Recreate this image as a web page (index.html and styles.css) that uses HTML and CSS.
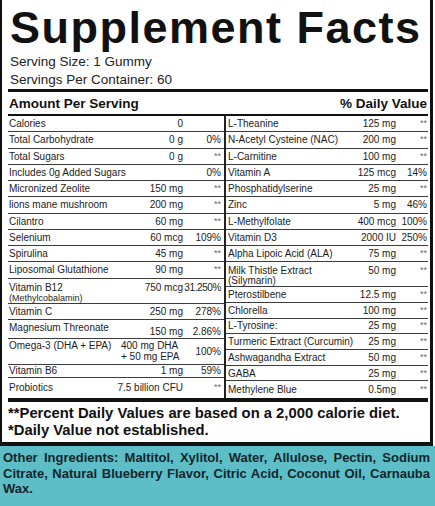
FILE: index.html
```html
<!DOCTYPE html>
<html lang="en">
<head>
  <meta charset="UTF-8" />
  <meta name="viewport" content="width=device-width, initial-scale=1.0" />
  <title>Supplement Facts</title>
  <link rel="stylesheet" href="styles.css">
</head>
<body>
  <div class="label">
    <h1 class="title">Supplement Facts</h1>
    <p class="serving">Serving Size: 1 Gummy</p>
    <p class="serving">Servings Per Container: 60</p>
    <div class="head-row">
      <span>Amount Per Serving</span>
      <span>% Daily Value</span>
    </div>

    <div class="facts">
      <div class="col col-left">
        <div class="row"><span class="name">Calories</span><span class="amt">0</span><span class="dv"></span></div>
        <div class="row"><span class="name">Total Carbohydrate</span><span class="amt">0 g</span><span class="dv">0%</span></div>
        <div class="row"><span class="name">Total Sugars</span><span class="amt">0 g</span><span class="dv na">**</span></div>
        <div class="row"><span class="name">Includes 0g Added Sugars</span><span class="amt"></span><span class="dv">0%</span></div>
        <div class="row"><span class="name">Micronized Zeolite</span><span class="amt">150 mg</span><span class="dv na">**</span></div>
        <div class="row"><span class="name">lions mane mushroom</span><span class="amt">200 mg</span><span class="dv na">**</span></div>
        <div class="row"><span class="name">Cilantro</span><span class="amt">60 mg</span><span class="dv na">**</span></div>
        <div class="row"><span class="name">Selenium</span><span class="amt">60 mcg</span><span class="dv">109%</span></div>
        <div class="row"><span class="name">Spirulina</span><span class="amt">45 mg</span><span class="dv na">**</span></div>
        <div class="row"><span class="name">Liposomal Glutathione</span><span class="amt">90 mg</span><span class="dv na">**</span></div>
        <div class="row two b12"><span class="name">Vitamin B12<span class="sub small">(Methylcobalamin)</span></span><span class="amt">750 mcg</span><span class="dv tight">31.250%</span></div>
        <div class="row"><span class="name">Vitamin C</span><span class="amt">250 mg</span><span class="dv">278%</span></div>
        <div class="row mg"><span class="name">Magnesium Threonate</span><span class="amt">150 mg</span><span class="dv">2.86%</span></div>
        <div class="row omega"><span class="name">Omega-3 (DHA + EPA)</span><span class="amt stack">400 mg DHA<br>+ 50 mg EPA</span><span class="dv">100%</span></div>
        <div class="row b6"><span class="name">Vitamin B6</span><span class="amt">1 mg</span><span class="dv">59%</span></div>
        <div class="row last"><span class="name">Probiotics</span><span class="amt">7.5 billion CFU</span><span class="dv na">**</span></div>
      </div>

      <div class="col col-right">
        <div class="row"><span class="name">L-Theanine</span><span class="amt">125 mg</span><span class="dv na">**</span></div>
        <div class="row"><span class="name">N-Acetyl Cysteine (NAC)</span><span class="amt">200 mg</span><span class="dv na">**</span></div>
        <div class="row"><span class="name">L-Carnitine</span><span class="amt">100 mg</span><span class="dv na">**</span></div>
        <div class="row"><span class="name">Vitamin A</span><span class="amt">125 mcg</span><span class="dv">14%</span></div>
        <div class="row"><span class="name">Phosphatidylserine</span><span class="amt">25 mg</span><span class="dv na">**</span></div>
        <div class="row"><span class="name">Zinc</span><span class="amt">5 mg</span><span class="dv">46%</span></div>
        <div class="row"><span class="name">L-Methylfolate</span><span class="amt">400 mcg</span><span class="dv">100%</span></div>
        <div class="row"><span class="name">Vitamin D3</span><span class="amt">2000 IU</span><span class="dv">250%</span></div>
        <div class="row"><span class="name">Alpha Lipoic Acid (ALA)</span><span class="amt">75 mg</span><span class="dv na">**</span></div>
        <div class="row two thistle"><span class="name">Milk Thistle Extract<span class="sub">(Silymarin)</span></span><span class="amt">50 mg</span><span class="dv na">**</span></div>
        <div class="row short"><span class="name">Pterostilbene</span><span class="amt">12.5 mg</span><span class="dv na">**</span></div>
        <div class="row short"><span class="name">Chlorella</span><span class="amt">100 mg</span><span class="dv na">**</span></div>
        <div class="row short"><span class="name">L-Tyrosine:</span><span class="amt">25 mg</span><span class="dv na">**</span></div>
        <div class="row short"><span class="name">Turmeric Extract (Curcumin)</span><span class="amt">25 mg</span><span class="dv na">**</span></div>
        <div class="row short"><span class="name">Ashwagandha Extract</span><span class="amt">50 mg</span><span class="dv na">**</span></div>
        <div class="row short"><span class="name">GABA</span><span class="amt">25 mg</span><span class="dv na">**</span></div>
        <div class="row last"><span class="name">Methylene Blue</span><span class="amt">0.5mg</span><span class="dv na">**</span></div>
      </div>
    </div>

    <div class="notes">
      <p>**Percent Daily Values are based on a 2,000 calorie diet.</p>
      <p>*Daily Value not established.</p>
    </div>
  </div>

  <div class="other">
    Other Ingredients: Maltitol, Xylitol, Water, Allulose, Pectin, Sodium Citrate, Natural Blueberry Flavor, Citric Acid, Coconut Oil, Carnauba Wax.
  </div>
</body>
</html>
```

FILE: styles.css
```css
html, body {
  margin: 0;
  padding: 0;
  width: 435px;
  height: 506px;
  overflow: hidden;
  background: #fff;
  font-family: "Liberation Sans", Arial, sans-serif;
  color: #1c1c1c;
}

.label {
  margin-right: 2px;
  padding: 0 2px 0 6px;
  border-left: 2px solid #111;
  border-right: 3px solid #111;
  border-bottom: 4px solid #111;
  background: #fff;
}

.title {
  margin: 0;
  padding: 3px 0 0 2px;
  font-size: 45px;
  line-height: 50px;
  font-weight: bold;
  letter-spacing: 1.5px;
  color: #111;
  white-space: nowrap;
}

.serving {
  margin: 0;
  padding-left: 2px;
  font-size: 13.5px;
  line-height: 18px;
  color: #222;
}

.head-row {
  display: flex;
  justify-content: space-between;
  align-items: center;
  height: 22px;
  padding: 0 1px;
  border-top: 3px solid #111;
  border-bottom: 2px solid #111;
  font-size: 13.5px;
  font-weight: bold;
  color: #111;
}

.facts {
  display: grid;
  grid-template-columns: 218px minmax(0, 1fr);
  height: 282px;
}

.col {
  display: flex;
  flex-direction: column;
  min-width: 0;
}

.col-left {
  border-right: 2px solid #222;
}

.row {
  display: grid;
  align-items: center;
  flex: none;
  height: 16.25px;
  box-sizing: border-box;
  border-bottom: 1.5px solid #3c3c3c;
  font-size: 10px;
  line-height: 11px;
  white-space: nowrap;
}

.col-left .row {
  grid-template-columns: minmax(0, 1fr) 70px 38px;
  padding: 0 3px 0 1px;
}

.col-right .row {
  grid-template-columns: minmax(0, 1fr) 70px 31px;
  padding: 0 1px 0 2px;
}

.name {
  min-width: 0;
}

.amt, .dv {
  display: flex;
  justify-content: flex-end;
}

.dv.na {
  font-size: 9px;
  color: #6a6a6a;
}

.dv.tight {
  letter-spacing: -0.4px;
}

.sub {
  display: block;
  line-height: 10px;
}

.sub.small {
  font-size: 9px;
}

.col .row.two {
  height: 25px;
  align-items: start;
}

.col .row.b12 {
  padding-top: 3.5px;
}

.col .row.thistle {
  padding-top: 2.5px;
}

.col .row.mg {
  height: 19px;
  align-items: start;
  padding-top: 2.5px;
}

.row.mg .amt, .row.mg .dv {
  margin-top: 4px;
}

.col .row.omega {
  height: 26px;
  align-items: start;
  padding-top: 1px;
}

.row.omega .dv {
  align-self: center;
}

.amt.stack {
  display: block;
  text-align: left;
  padding-left: 8px;
}

.row.b6 {
  height: 13px;
}

.row.short {
  height: 15.7px;
}

.row.last {
  flex: 1;
  border-bottom: none;
}

.notes {
  padding: 2.5px 0 3.5px 0;
  border-top: 4px solid #111;
  font-size: 14.8px;
  line-height: 17px;
  font-weight: bold;
  color: #111;
}

.notes p {
  margin: 0;
}

.other {
  height: 60px;
  box-sizing: border-box;
  padding: 4px 5px 0 3px;
  background: #5dbec7;
  color: #13262b;
  font-size: 13px;
  line-height: 15.5px;
  font-weight: bold;
  text-align: justify;
}
```
